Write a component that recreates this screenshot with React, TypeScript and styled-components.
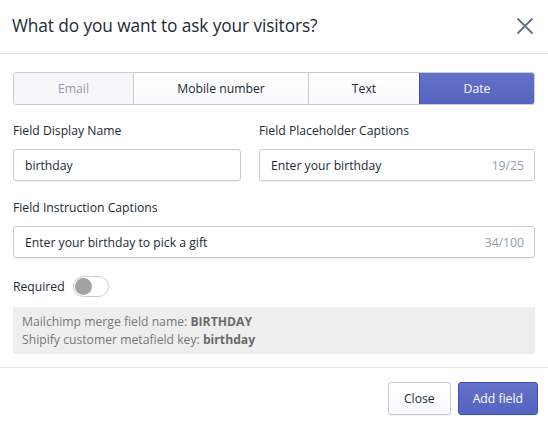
import React, { useState } from "react";
import styled, { createGlobalStyle, css } from "styled-components";

const GlobalStyle = createGlobalStyle`
  html, body {
    margin: 0;
    padding: 0;
    background: #ffffff;
  }
  body {
    font-family: "Open Sans", "Noto Sans", sans-serif;
    color: #212b36;
  }
  * { box-sizing: border-box; }
`;

const Modal = styled.div`
  width: 548px;
  height: 425px;
  display: flex;
  flex-direction: column;
  background: #fff;
`;

const Header = styled.header`
  height: 54px;
  display: flex;
  align-items: center;
  justify-content: space-between;
  padding: 0 14px 2px 12px;
  border-bottom: 1px solid #dfe3e8;
`;

const Title = styled.h1`
  margin: 0;
  font-size: 17.3px;
  font-weight: 400;
  color: #212b36;
  letter-spacing: -0.1px;
`;

const CloseIcon = styled.button`
  border: 0;
  background: none;
  padding: 0;
  width: 18px;
  height: 18px;
  display: flex;
  cursor: pointer;
`;

const Body = styled.div`
  padding: 18px 13px 13px 13px;
  display: flex;
  flex-direction: column;
  border-bottom: 1px solid #dfe3e8;
`;

const Segmented = styled.div`
  display: grid;
  grid-template-columns: 119px 175px 111px 1fr;
  height: 33px;
  border: 1px solid #c4cdd5;
  border-radius: 3px;
  overflow: hidden;
  margin-bottom: 17px;
`;

const Segment = styled.button<{ $active?: boolean; $muted?: boolean }>`
  border: 0;
  border-left: 1px solid #c4cdd5;
  font-family: inherit;
  font-size: 12.2px;
  color: #212b36;
  background: linear-gradient(180deg, #fff, #f9fafb);
  cursor: pointer;
  &:first-child { border-left: 0; }
  ${(p) =>
    p.$muted &&
    css`
      background: #f4f6f8;
      color: #919eab;
    `}
  ${(p) =>
    p.$active &&
    css`
      background: linear-gradient(180deg, #6371c7, #5563c1);
      border-left-color: #3f4eae;
      color: #fff;
    `}
`;

const Row = styled.div`
  display: grid;
  grid-template-columns: 228px 1fr;
  gap: 18px;
  margin-bottom: 18px;
`;

const Field = styled.div`
  display: flex;
  flex-direction: column;
`;

const Label = styled.label`
  font-size: 12.2px;
  color: #212b36;
  line-height: 17px;
  margin-bottom: 10px;
`;

const InputBox = styled.div`
  height: 32px;
  border: 1px solid #c4cdd5;
  border-radius: 3px;
  display: flex;
  align-items: center;
  padding: 0 10px 0 11px;
  box-shadow: 0 1px 0 rgba(22, 29, 37, 0.05);
`;

const Input = styled.input`
  flex: 1;
  min-width: 0;
  border: 0;
  outline: none;
  padding: 0;
  font-family: inherit;
  font-size: 12.2px;
  color: #212b36;
  background: transparent;
`;

const Counter = styled.span`
  font-size: 12.2px;
  color: #919eab;
`;

const RequiredRow = styled.div`
  display: flex;
  align-items: center;
  gap: 8px;
  margin: 18px 0 10px;
  font-size: 12.2px;
`;

const Toggle = styled.button<{ $on: boolean }>`
  width: 36px;
  height: 21px;
  border-radius: 11px;
  border: 1px solid #c4cdd5;
  background: ${(p) => (p.$on ? "#5c6ac4" : "#fff")};
  padding: 1px;
  display: flex;
  justify-content: ${(p) => (p.$on ? "flex-end" : "flex-start")};
  cursor: pointer;
  &::after {
    content: "";
    width: 17px;
    height: 17px;
    border-radius: 50%;
    background: ${(p) => (p.$on ? "#fff" : "#a3a3a3")};
  }
`;

const InfoBox = styled.div`
  background: #eeeeee;
  padding: 6px 9px 5px;
  font-size: 12.2px;
  line-height: 18px;
  color: #777;
  b { color: #6b6b6b; font-weight: 700; }
`;

const Footer = styled.footer`
  display: flex;
  justify-content: flex-end;
  gap: 7px;
  padding: 14px 10px 0;
`;

const Button = styled.button<{ $primary?: boolean }>`
  height: 33px;
  padding: 0 15px;
  border-radius: 3px;
  font-family: inherit;
  font-size: 12.2px;
  cursor: pointer;
  border: 1px solid #c4cdd5;
  color: #212b36;
  background: linear-gradient(180deg, #fff, #f9fafb);
  box-shadow: 0 1px 0 rgba(22, 29, 37, 0.05);
  ${(p) =>
    p.$primary &&
    css`
      border-color: #3f4eae;
      color: #fff;
      background: linear-gradient(180deg, #6371c7, #5563c1);
      padding: 0 14px;
    `}
`;

const types = ["Email", "Mobile number", "Text", "Date"];

export default function App() {
  const [required, setRequired] = useState(false);
  return (
    <Modal>
      <GlobalStyle />
      <Header>
        <Title>What do you want to ask your visitors?</Title>
        <CloseIcon aria-label="Close">
          <svg width="18" height="18" viewBox="0 0 18 18">
            <path d="M2 2 L16 16 M16 2 L2 16" stroke="#637381" strokeWidth="1.8" strokeLinecap="round" />
          </svg>
        </CloseIcon>
      </Header>
      <Body>
        <Segmented>
          {types.map((t) => (
            <Segment key={t} $muted={t === "Email"} $active={t === "Date"}>
              {t}
            </Segment>
          ))}
        </Segmented>
        <Row>
          <Field>
            <Label>Field Display Name</Label>
            <InputBox>
              <Input defaultValue="birthday" />
            </InputBox>
          </Field>
          <Field>
            <Label>Field Placeholder Captions</Label>
            <InputBox>
              <Input defaultValue="Enter your birthday" />
              <Counter>19/25</Counter>
            </InputBox>
          </Field>
        </Row>
        <Field>
          <Label>Field Instruction Captions</Label>
          <InputBox>
            <Input defaultValue="Enter your birthday to pick a gift" />
            <Counter>34/100</Counter>
          </InputBox>
        </Field>
        <RequiredRow>
          Required
          <Toggle $on={required} onClick={() => setRequired(!required)} />
        </RequiredRow>
        <InfoBox>
          Mailchimp merge field name: <b>BIRTHDAY</b>
          <br />
          Shipify customer metafield key: <b>birthday</b>
        </InfoBox>
      </Body>
      <Footer>
        <Button>Close</Button>
        <Button $primary>Add field</Button>
      </Footer>
    </Modal>
  );
}
